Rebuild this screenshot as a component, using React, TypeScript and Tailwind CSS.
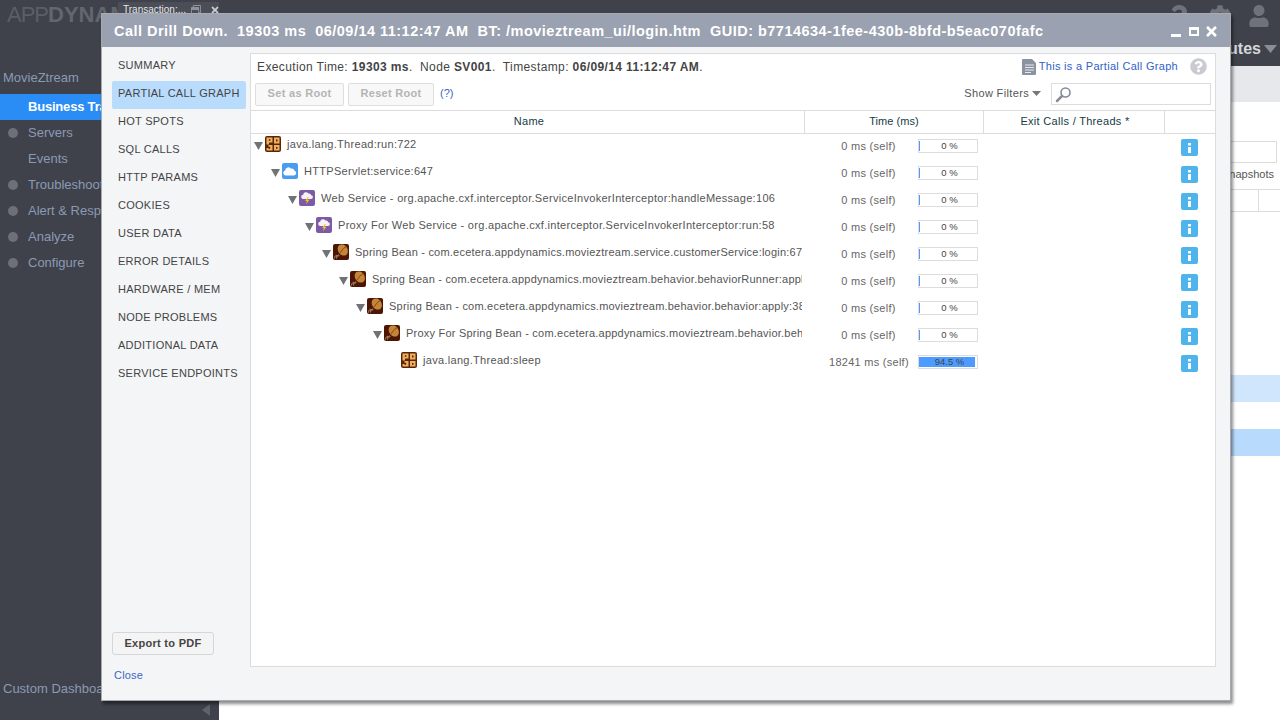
import React from "react";
import { FaQuestion, FaCog, FaUser, FaTimes, FaRegWindowRestore, FaQuestionCircle } from "react-icons/fa";

const NAV = [
  "SUMMARY",
  "PARTIAL CALL GRAPH",
  "HOT SPOTS",
  "SQL CALLS",
  "HTTP PARAMS",
  "COOKIES",
  "USER DATA",
  "ERROR DETAILS",
  "HARDWARE / MEM",
  "NODE PROBLEMS",
  "ADDITIONAL DATA",
  "SERVICE ENDPOINTS",
];

const SIDE = [
  { label: "Servers", dot: true },
  { label: "Events", dot: false },
  { label: "Troubleshoot", dot: true },
  { label: "Alert & Respond", dot: true },
  { label: "Analyze", dot: true },
  { label: "Configure", dot: true },
];

type Kind = "pojo" | "cloud" | "ws" | "bean";

const ROWS: { kind: Kind; name: string; time: string; pct: number }[] = [
  { kind: "pojo", name: "java.lang.Thread:run:722", time: "0 ms (self)", pct: 0 },
  { kind: "cloud", name: "HTTPServlet:service:647", time: "0 ms (self)", pct: 0 },
  { kind: "ws", name: "Web Service - org.apache.cxf.interceptor.ServiceInvokerInterceptor:handleMessage:106", time: "0 ms (self)", pct: 0 },
  { kind: "ws", name: "Proxy For Web Service - org.apache.cxf.interceptor.ServiceInvokerInterceptor:run:58", time: "0 ms (self)", pct: 0 },
  { kind: "bean", name: "Spring Bean - com.ecetera.appdynamics.movieztream.service.customerService:login:67", time: "0 ms (self)", pct: 0 },
  { kind: "bean", name: "Spring Bean - com.ecetera.appdynamics.movieztream.behavior.behaviorRunner:apply:52", time: "0 ms (self)", pct: 0 },
  { kind: "bean", name: "Spring Bean - com.ecetera.appdynamics.movieztream.behavior.behavior:apply:38", time: "0 ms (self)", pct: 0 },
  { kind: "bean", name: "Proxy For Spring Bean - com.ecetera.appdynamics.movieztream.behavior.behavior:apply", time: "0 ms (self)", pct: 0 },
  { kind: "pojo", name: "java.lang.Thread:sleep", time: "18241 ms (self)", pct: 94.5 },
];

const NodeIcon = ({ kind }: { kind: Kind }) => {
  if (kind === "pojo") {
    return (
      <svg width="16" height="16" viewBox="0 0 16 16" className="shrink-0">
        <rect width="16" height="16" rx="2" fill="#5a2606" />
        <path d="M1.500 1.500h6v5h-3.500v2h-2.500z M3.800 3.200v1.500h1.600v-1.500z" fill="#eeb060" fillRule="evenodd" />
        <path d="M9 1.500h5.500v6H9z M11 3.500v2h1.500v-2z" fill="#eeb060" fillRule="evenodd" />
        <path d="M3.500 9h4v5.500h-6v-2.500h2v.8h1.700V10.800H3.500z" fill="#eeb060" />
        <path d="M9 9h5.500v5.500H9z M11 11v1.800h1.500V11z" fill="#eeb060" fillRule="evenodd" />
      </svg>
    );
  }
  if (kind === "cloud") {
    return (
      <svg width="16" height="16" viewBox="0 0 16 16" className="shrink-0">
        <rect width="16" height="16" rx="2" fill="#4a9cf0" />
        <path d="M3.500 12.500a2.600 2.600 0 0 1-.3-5.100 3.200 3.200 0 0 1 5.900-1.600 2.500 2.500 0 0 1 3.400 2 2.400 2.400 0 0 1-.5 4.700z" fill="#fff" />
      </svg>
    );
  }
  if (kind === "ws") {
    return (
      <svg width="16" height="16" viewBox="0 0 16 16" className="shrink-0">
        <rect width="16" height="16" rx="2" fill="#7d5aa6" />
        <path d="M4.400 9a2.100 2.100 0 0 1-.2-4.200 2.800 2.800 0 0 1 5.200-1.200 2.200 2.200 0 0 1 2.800 1.600A1.900 1.900 0 0 1 11.800 9z" fill="#f4f1f8" />
        <path d="M8.800 7 6.200 11h1.700l-.9 3.500 3.400-4.700H8.500l1.400-2.800z" fill="#f5c32c" />
      </svg>
    );
  }
  return (
    <svg width="16" height="16" viewBox="0 0 16 16" className="shrink-0">
      <rect width="16" height="16" rx="2" fill="#4c1603" />
      <ellipse cx="9.800" cy="6" rx="4.700" ry="6" transform="rotate(-35 9.800 6)" fill="#c4843a" />
      <path d="M6 10C8.500 8 9 4.500 13.500 2.500" stroke="#7a3e10" strokeWidth="0.9" fill="none" />
      <path d="M1.500 14.500c.2-2 1-3 2-3.200.8 0 .4 1.600-.2 1.400M3.500 14.500c.2-2 1-3.400 2-3.600.8 0 .4 1.600-.2 1.400" stroke="#b59a84" strokeWidth="0.9" fill="none" />
    </svg>
  );
};

const Triangle = () => (
  <svg width="9" height="8" viewBox="0 0 9 8" className="shrink-0">
    <path d="M0 0h9L4.500 8z" fill="#6f7378" />
  </svg>
);

const App: React.FC = () => {
  return (
    <div className="relative flex h-[720px] w-[1280px] overflow-hidden bg-white font-['Liberation_Sans',Arial,sans-serif]">
      {/* dark nav behind the dialog */}
      <aside className="flex w-[219px] shrink-0 flex-col bg-[#3f424b]">
        <div className="flex h-[66px] items-start">
          <div className="w-[118px] shrink-0 overflow-hidden whitespace-nowrap pl-[7px] pt-[4px] text-[22px] leading-[22px] text-[#63666f]">
            <span className="tracking-[-1px] text-[#5b5e67]">APP</span>
            <span className="font-bold">DYNAMICS</span>
          </div>
          <div className="mt-[2px] flex h-[18px] w-[108px] shrink-0 items-start bg-[#4b4e57] pl-[5px] pt-[2px] text-[10px] leading-[12px] whitespace-nowrap text-[#e4e6ea]">
            <span className="w-[68px] shrink-0">Transaction:...</span>
            <FaRegWindowRestore className="mt-[1px] text-[10px] text-[#8f929a]" />
            <FaTimes className="ml-[9px] mt-[1px] text-[10px] text-[#c9ccd2]" />
          </div>
        </div>
        <div className="pl-[3px] pt-[4px] text-[13px] leading-[16px] text-[#8b9ab3]">MovieZtream</div>
        <div className="mt-[8px] h-[26px] bg-[#2a8cf5] pl-[28px] text-[13px] leading-[26px] font-bold tracking-[-0.2px] text-white">
          Business Transactions
        </div>
        {SIDE.map((item) => (
          <div key={item.label} className="flex h-[26px] items-center text-[13px] text-[#8b9ab3]">
            <span className="flex w-[28px] justify-center pr-[2px]">
              {item.dot && <span className="h-[10px] w-[10px] rounded-full bg-[#6d707a]" />}
            </span>
            {item.label}
          </div>
        ))}
        <div className="mt-auto pb-[15px] pl-[3px] text-[13px] leading-[16px] text-[#8b9ab3]">Custom Dashboards</div>
        <div className="flex h-[8px] justify-end pr-[9px]">
          <svg width="8" height="12" viewBox="0 0 8 12" className="-mt-[8px]">
            <path d="M8 0v12L0 6z" fill="#5f626b" />
          </svg>
        </div>
      </aside>

      {/* page behind the dialog */}
      <main className="flex min-w-0 flex-1 flex-col">
        <div className="flex h-[66px] flex-col bg-[#3f424b]">
          <div className="flex h-[37px] items-start justify-end pr-[10px] pt-[5px] text-[#6f727b]">
            <FaQuestion className="mr-[19px] text-[22px]" />
            <FaCog className="mr-[17px] text-[22px]" />
            <FaUser className="text-[22px]" />
          </div>
          <div className="flex items-center justify-end pr-[3px] text-[16px] font-bold text-[#d5d7dc]">
            Minutes
            <svg width="13" height="8" viewBox="0 0 13 8" className="ml-[3px]">
              <path d="M0 0h13L6.500 8z" fill="#8a8d95" />
            </svg>
          </div>
        </div>
        <div className="h-[36px] bg-[#e7e8ec]" />
        <div className="flex flex-col items-end pt-[39px]">
          <div className="mr-[3px] h-[22px] w-[100px] border border-[#dcdcdc]" />
          <div className="mr-[6px] mt-[1px] h-[20px] text-[11px] leading-[20px] text-[#555]">Snapshots</div>
          <div className="mt-[5px] flex h-[23px] w-full justify-end border-y border-[#dcdcdc]">
            <div className="w-[22px] border-l border-[#dcdcdc]" />
          </div>
          <div className="mt-[163px] h-[27px] w-full bg-[#d0e6fc]" />
          <div className="mt-[27px] h-[27px] w-full bg-[#b8dbfd]" />
        </div>
      </main>

      {/* dialog */}
      <div className="absolute left-[101px] top-[13px] flex h-[688px] w-[1130px] flex-col border border-[#a9abaf] bg-[#f4f5f7] shadow-[2px_3px_3px_rgba(0,0,0,0.45)]">
        <div className="flex h-[33px] shrink-0 items-center justify-between bg-[#9aa1b0] pl-[12px] pr-[11px] pt-[2px] text-[14.500px] font-bold whitespace-pre tracking-[0.48px] text-white">
          <span>Call Drill Down.  19303 ms  06/09/14 11:12:47 AM  BT: /movieztream_ui/login.htm  GUID: b7714634-1fee-430b-8bfd-b5eac070fafc</span>
          <span className="flex items-center">
            <span className="mr-[8px] mt-[8px] h-[3px] w-[10px] bg-white" />
            <span className="mr-[5px] h-[9px] w-[10px] border-[2px] border-t-[3px] border-white" />
            <FaTimes className="text-[15px]" />
          </span>
        </div>

        <div className="flex min-h-0 flex-1">
          <div className="flex w-[148px] shrink-0 flex-col pl-[10px] pt-[6px]">
            {NAV.map((item) => (
              <div
                key={item}
                className={`h-[28px] w-[134px] rounded-[2px] pl-[6px] text-[11px] leading-[24px] tracking-[0.27px] text-[#444] ${
                  item === "PARTIAL CALL GRAPH" ? "bg-[#b9dcfc]" : ""
                }`}
              >
                {item}
              </div>
            ))}
            <button className="mt-auto h-[23px] w-[102px] rounded-[3px] border border-[#d5d6d9] bg-[#f4f4f4] pb-[1px] text-[11px] font-bold tracking-[0.3px] text-[#444]">
              Export to PDF
            </button>
            <div className="mb-[18px] mt-[13px] pl-[2px] text-[11px] leading-[14px] tracking-[0.2px] text-[#3d67c4]">Close</div>
          </div>

          <div className="mb-[33px] mr-[14px] mt-[6px] flex min-w-0 flex-1 flex-col border border-[#dcdcdc] bg-white">
            <div className="flex h-[27px] shrink-0 items-center pb-[2px] pl-[6px] pr-[8px] text-[12px] whitespace-pre tracking-[0.38px] text-[#444]">
              <span>
                Execution Time: <b>19303 ms</b>.  Node <b>SV001</b>.  Timestamp: <b>06/09/14 11:12:47 AM</b>.
              </span>
              <svg width="15" height="16" viewBox="0 0 15 16" className="ml-auto">
                <path d="M1 0h9l4 4v11a1 1 0 0 1-1 1H1a1 1 0 0 1-1-1V1a1 1 0 0 1 1-1z" fill="#8b93a3" />
                <path d="M3 6h9M3 8.500h9M3 11h9M3 13.500h6" stroke="#e6e8ec" strokeWidth="1" />
              </svg>
              <span className="ml-[2px] text-[11px] tracking-[0.3px] text-[#2f62c6]">This is a Partial Call Graph</span>
              <FaQuestionCircle className="ml-[12px] text-[17px] text-[#c9cbd1]" />
            </div>

            <div className="flex h-[29px] shrink-0 items-start pl-[4px] pr-[4px] pt-[2px]">
              <button className="h-[23px] w-[89px] rounded-[2px] border border-[#dedede] bg-[#f8f8f8] pb-[2px] text-[11px] font-bold tracking-[0.3px] text-[#b4b4b4]">
                Set as Root
              </button>
              <button className="ml-[4px] h-[23px] w-[86px] rounded-[2px] border border-[#dedede] bg-[#f8f8f8] pb-[2px] text-[11px] font-bold tracking-[0.3px] text-[#b4b4b4]">
                Reset Root
              </button>
              <span className="ml-[6px] text-[11px] leading-[21px] text-[#3d67c4]">(?)</span>
              <span className="ml-auto text-[11px] leading-[21px] tracking-[0.35px] text-[#555]">Show Filters</span>
              <svg width="9" height="5" viewBox="0 0 9 5" className="ml-[3px] mt-[8px]">
                <path d="M0 0h9L4.500 5z" fill="#777" />
              </svg>
              <div className="ml-[10px] flex h-[22px] w-[160px] items-center border border-[#dcdcdc] pl-[3px]">
                <svg width="17" height="17" viewBox="0 0 17 17">
                  <circle cx="10.500" cy="6.500" r="4.500" fill="#fff" stroke="#7d8ca3" strokeWidth="1.600" />
                  <path d="M7 10l-5 5" stroke="#8d8d8d" strokeWidth="2.500" strokeLinecap="round" />
                </svg>
              </div>
            </div>

            <div className="flex h-[24px] shrink-0 border-y border-[#dcdcdc] text-[11px] leading-[20px] tracking-[0.3px] text-[#173a45]">
              <div className="w-[554px] border-r border-[#dcdcdc] pl-[3px] text-center">Name</div>
              <div className="w-[179px] border-r border-[#dcdcdc] text-center tracking-[0.05px]">Time (ms)</div>
              <div className="w-[181px] border-r border-[#dcdcdc] pl-[2px] text-center">Exit Calls / Threads *</div>
            </div>

            <div className="min-h-0 flex-1">
              {ROWS.map((row, i) => (
                <div key={i} className="flex h-[27px] text-[11px] tracking-[0.27px] text-[#555]">
                  <div className="flex w-[551px] shrink-0 items-start overflow-hidden whitespace-nowrap pt-[2px]" style={{ paddingLeft: 3 + i * 17 }}>
                    <span className="mt-[6px] flex w-[11px] shrink-0">{i < ROWS.length - 1 && <Triangle />}</span>
                    <NodeIcon kind={row.kind} />
                    <span className={`ml-[6px] leading-[16px] ${row.kind === "bean" ? "tracking-[0.22px]" : "tracking-[0.3px]"}`}>
                      {row.name}
                    </span>
                  </div>
                  <div className="w-[106px] shrink-0 pl-[27px] pt-[4px] text-center leading-[16px] whitespace-nowrap text-[#666]">
                    {row.time}
                  </div>
                  <div className="ml-[10px] mt-[5px] h-[14px] w-[60px] shrink-0 border border-[#dcdcdc] py-px">
                    <div className="relative h-full w-full">
                      <div className="h-full bg-[#4d9bff]" style={{ width: row.pct ? "97%" : "1px" }} />
                      <div className="absolute inset-0 pl-[3px] text-center text-[9.500px] leading-[9px] tracking-normal text-[#444]">
                        {row.pct ? `${row.pct} %` : "0 %"}
                      </div>
                    </div>
                  </div>
                  <div className="ml-[203px] mt-[5px] h-[17px] w-[17px] shrink-0 rounded-[2px] bg-[#4fb4ec]">
                    <svg width="17" height="17" viewBox="0 0 17 17">
                      <path d="M7 4h3v2.500H7zM7 8h3v6H7z" fill="#fff" />
                    </svg>
                  </div>
                </div>
              ))}
            </div>
          </div>
        </div>
      </div>
    </div>
  );
};

export default App;
